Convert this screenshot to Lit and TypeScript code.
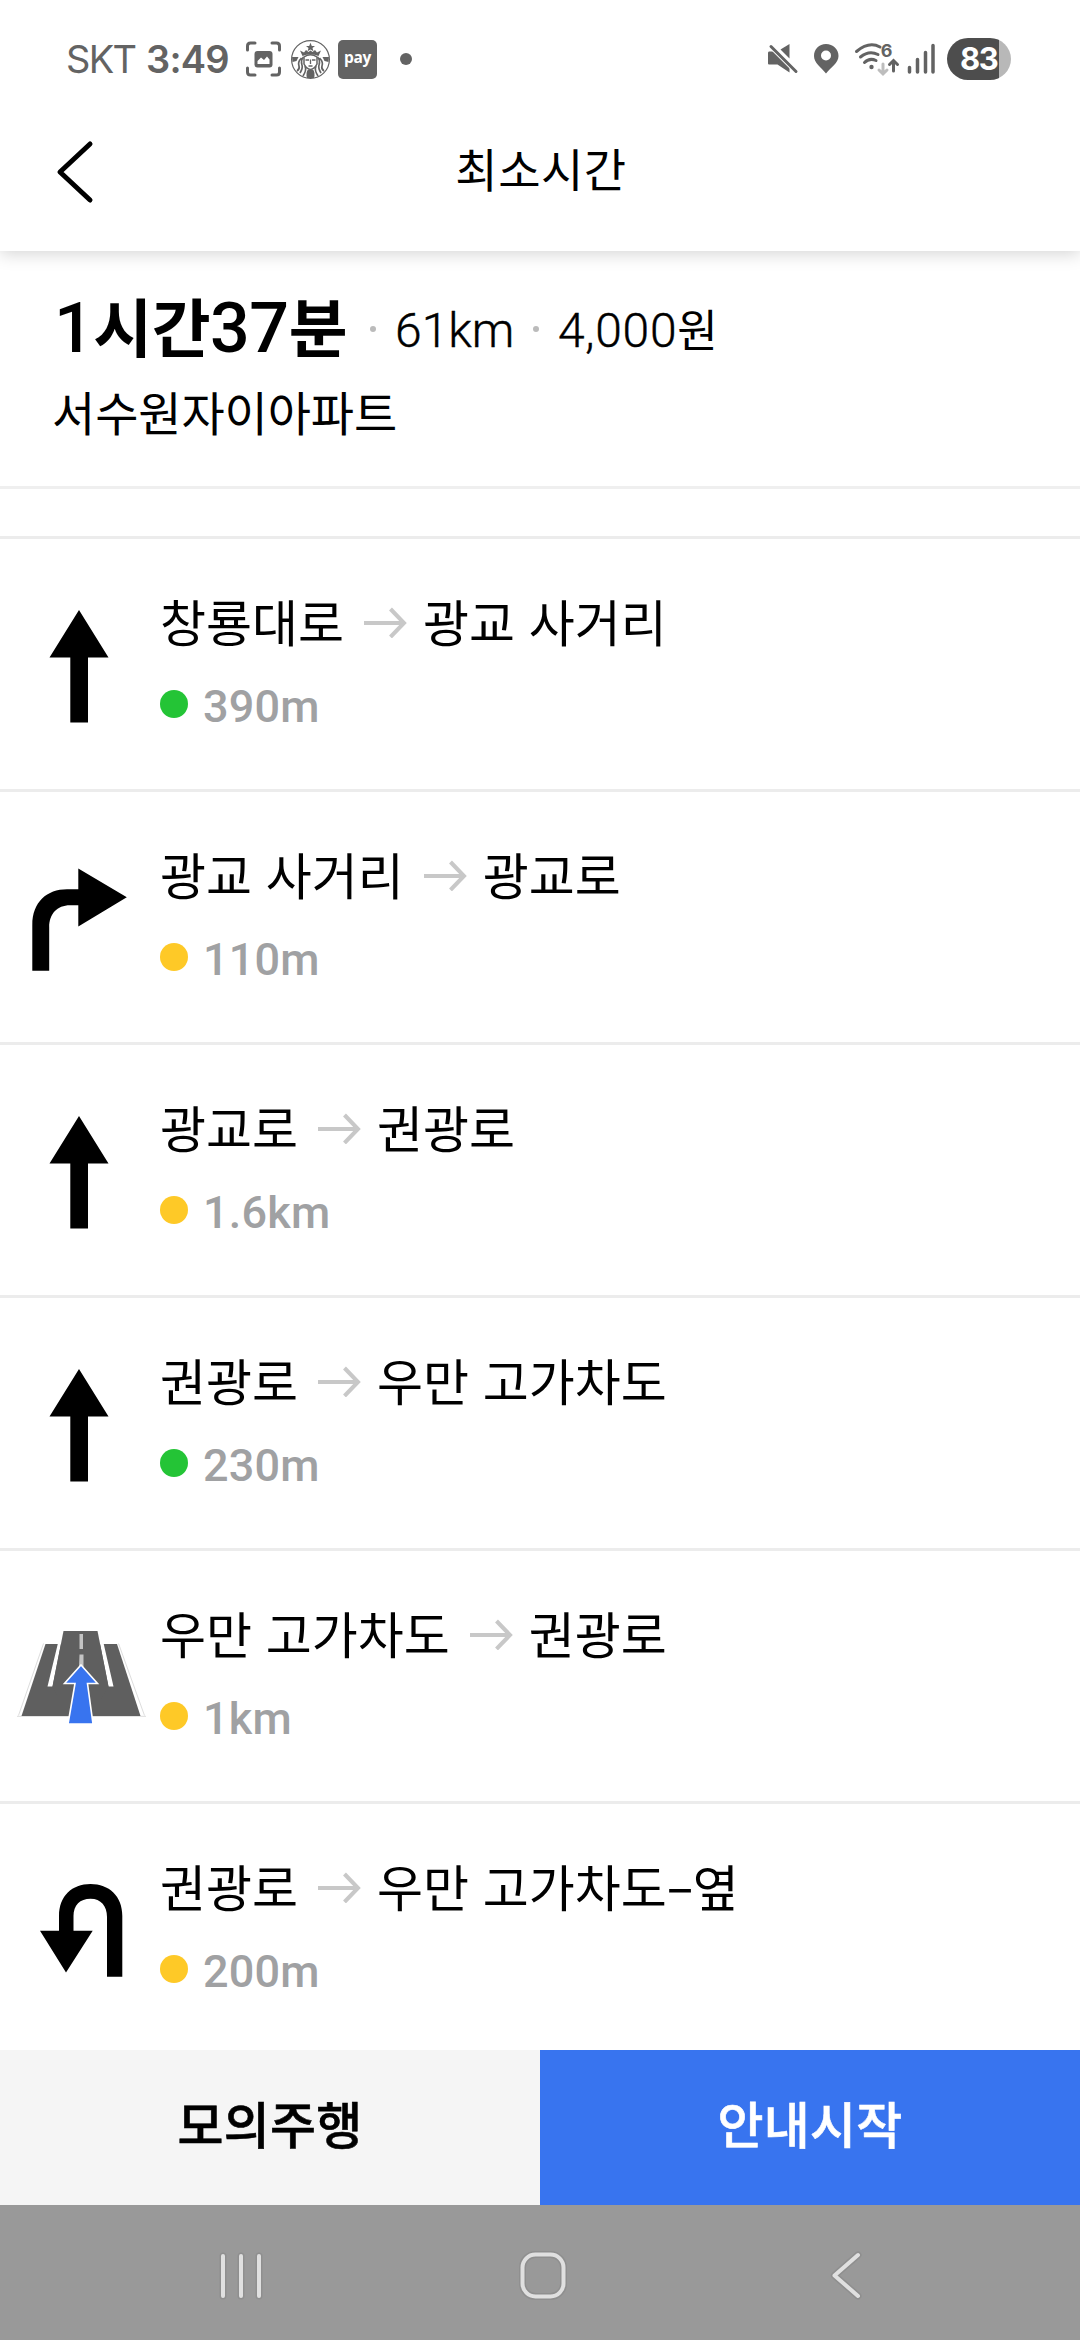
import { LitElement, html, css, svg, type SVGTemplateResult } from "lit";
import { customElement, property } from "lit/decorators.js";

type Maneuver = "straight" | "right" | "overpass" | "uturn";

interface Step {
  icon: Maneuver;
  from: string;
  to: string;
  distance: string;
  traffic: "smooth" | "slow";
}

const STEPS: Step[] = [
  { icon: "straight", from: "창룡대로", to: "광교 사거리", distance: "390m", traffic: "smooth" },
  { icon: "right", from: "광교 사거리", to: "광교로", distance: "110m", traffic: "slow" },
  { icon: "straight", from: "광교로", to: "권광로", distance: "1.6km", traffic: "slow" },
  { icon: "straight", from: "권광로", to: "우만 고가차도", distance: "230m", traffic: "smooth" },
  { icon: "overpass", from: "우만 고가차도", to: "권광로", distance: "1km", traffic: "slow" },
  { icon: "uturn", from: "권광로", to: "우만 고가차도-옆", distance: "200m", traffic: "slow" },
];

const MANEUVERS: Record<Maneuver, SVGTemplateResult> = {
  straight: svg`<path d="M79 71 L108.5 118.5 H88 V183.5 H70.3 V118.5 H49.5 Z" fill="#000"/>`,
  right: svg`<path d="M32.3 178.7 V133 C32.3 110 47 97.3 67 97.3 H78.3 V76.5 L126.8 105.2 L78.3 134.5 V113.2 H70 C57 113.2 49.2 122 49.2 135 V178.7 Z" fill="#000"/>`,
  overpass: svg`
    <path d="M43.5 92.5 L18.5 164.5 M118.5 92.5 L144.5 164.5 M17 165.3 H146" stroke="#ddd" stroke-width="1" fill="none"/>
    <path d="M45.5 93 H117 L140.5 165 H21.5 Z" fill="#5f5f5f"/>
    <path d="M58 92 L47.5 135.5 H52.5 L63.5 80 H97.5 L108.5 135.5 H113.5 L103.5 92 L98.5 79 H62.5 Z" fill="#fff"/>
    <path d="M63.5 80 H97.5 L108.5 135.5 L100 150 H60 L52.5 135.5 Z" fill="#5f5f5f"/>
    <path d="M79.5 83 H83 V98 H79.5 Z M79.5 103.500 H83.500 V116 H79 Z" fill="#c4c4c4"/>
    <path d="M81 114 L97.500 132.500 H87.500 L93 173 H68 L75 132.500 H64.500 Z" fill="#3874ef" stroke="#fff" stroke-width="1.6"/>`,
  uturn: svg`<path d="M122.300 172.700 V112 C122.300 92 109 80 90.500 80 C72 80 59 92 59 112 V126.700 H40 L66 168.500 L92.700 126.700 H73.500 V112 C73.500 101 80 94.700 90.500 94.700 C101 94.700 107 102 107 113 V172.700 Z" fill="#000"/>`,
};

@customElement("status-bar")
class StatusBar extends LitElement {
  static styles = css`
    :host {
      display: flex;
      align-items: flex-start;
      justify-content: space-between;
      height: 110px;
      padding: 30px 66px 0 66px;
      box-sizing: border-box;
      color: #636363;
      font-family: "Inter", "Roboto", sans-serif;
    }
    .side {
      display: flex;
      align-items: center;
      height: 58px;
    }
    .carrier {
      width: 80px;
      font-size: 38px;
      letter-spacing: -1.7px;
      white-space: nowrap;
      font-family: "Inter", sans-serif;
    }
    .clock {
      width: 100px;
      font-size: 38px;
      font-weight: 600;
      letter-spacing: -0.8px;
      white-space: nowrap;
    }
    .capture { margin-right: 10px; }
    .siren { margin-right: 8px; }
    .pay {
      width: 39px;
      height: 39px;
      border-radius: 5px;
      background: #636363;
      color: #fff;
      font: 700 15.500px/34px "Open Sans", sans-serif;
      text-align: center;
      letter-spacing: -0.3px;
    }
    .more {
      width: 12px;
      height: 12px;
      margin-left: 23px;
      border-radius: 50%;
      background: #636363;
    }
    .indicators { margin-right: 7px; }
    .battery {
      width: 64px;
      height: 42px;
      margin-right: 3px;
      border-radius: 21px;
      background: linear-gradient(90deg, #4d4d4d 52px, #b8b8b8 52px);
      color: #fff;
      font: 700 31px/42px "Inter", sans-serif;
      letter-spacing: -1.5px;
      text-indent: 13px;
    }
  `;

  render() {
    return html`
      <div class="side">
        <span class="carrier">SKT</span>
        <span class="clock">3:49</span>
        <svg class="capture" width="35" height="36" viewBox="0 0 35 36" fill="none">
          <path d="M1.500 9 V5 Q1.500 2 4.500 2 H9 M26 2 H30.500 Q33.500 2 33.500 5 V9 M33.500 27 V31 Q33.500 34 30.500 34 H26 M9 34 H4.500 Q1.500 34 1.500 31 V27" stroke="#636363" stroke-width="3" stroke-linecap="round"/>
          <rect x="8.500" y="10" width="18" height="16.500" rx="3" fill="#636363"/>
          <path d="M11.500 23 V20 L15 16.500 L18 19 L21 15.500 L23.500 18.500 V23 Z" fill="#fff"/>
        </svg>
        <svg class="siren" width="39" height="39" viewBox="0 0 39 39">
          <circle cx="19.500" cy="19.500" r="18.900" fill="#fff" stroke="#636363" stroke-width="1.200"/>
          <path d="M19.500 2.800 L20.800 6 H24 L21.500 8 L22.400 11.300 L19.500 9.400 L16.600 11.300 L17.500 8 L15 6 H18.200 Z" fill="#636363"/>
          <path d="M9 10.500 L13 12.500 L15 10 L17.500 12 L19.500 10.500 L21.500 12 L24 10 L26 12.500 L30 10.500 L27.500 16 Q19.500 12.500 11.500 16 Z" fill="#636363"/>
          <path d="M1 17 H7.500 L5.500 21 L1.500 22 Z M38 17 H31.500 L33.500 21 L37.500 22 Z" fill="#636363"/>
          <path d="M13 17 Q19.500 12.500 26 17 V24 Q23.500 29 19.500 29.500 Q15.500 29 13 24 Z" fill="#fff" stroke="#636363" stroke-width="1.500"/>
          <path d="M14.500 20 H18 M21 20 H24.500 M19.500 19.500 V24 M17.500 26 H21.500" stroke="#636363" stroke-width="1.300"/>
          <path d="M12.500 17 Q9.500 20 11 25 Q12 28 9 33 M10.500 18 Q6.500 22 8 26 Q9 29 6 31 M14 26 Q16 30 12 36 M26.500 17 Q29.500 20 28 25 Q27 28 30 33 M28.500 18 Q32.500 22 31 26 Q30 29 33 31 M25 26 Q23 30 27 36" fill="none" stroke="#636363" stroke-width="1.700"/>
          <path d="M16 38 Q14.500 33 17 29.500 H22 Q24.500 33 23 38 Z" fill="#636363"/>
        </svg>
        <span class="pay">pay</span>
        <span class="more"></span>
      </div>
      <div class="side">
        <svg class="indicators" width="174" height="42" viewBox="0 0 174 42" fill="none">
          <path d="M3 13.500 H9 L23.500 26 V34.500 L11.500 26.500 H3 Q2 26.500 2 25.500 V15 Q2 13.500 3 13.500 Z" fill="#636363"/>
          <path d="M14.500 11.500 L23.500 6 V20.500 Z" fill="#636363"/>
          <path d="M2 5 L31 34" stroke="#fff" stroke-width="5.500"/>
          <path d="M5 8.500 L30 33.500" stroke="#636363" stroke-width="3" stroke-linecap="round"/>
          <path d="M60 6 C53 6 48 11 48 18 C48 25 55 29 60 35.500 C65 29 72.500 25 72.500 18 C72.500 11 67 6 60 6 Z" fill="#636363"/>
          <circle cx="60" cy="17.500" r="5" fill="#fff"/>
          <g stroke="#636363" stroke-width="3" stroke-linecap="round">
            <path d="M90.500 13.500 Q103 3 114 9"/>
            <path d="M94.500 19 Q103 12 112 16.500"/>
            <path d="M98.500 24.500 Q103.500 19.500 110 22.500"/>
            <path d="M127.500 33 V24 M123.500 26.500 L127.500 22.500 L131.500 26.500"/>
            <path d="M143.500 34 V29.500 M151.500 34 V21.500 M159.500 34 V14.500 M167 34 V7.500" stroke-width="3.500"/>
          </g>
          <circle cx="105.500" cy="29" r="2.200" fill="#636363"/>
          <path d="M117 26 V35 M113 32 L117 36 L121 32" stroke="#bdbdbd" stroke-width="3" stroke-linecap="round"/>
          <text x="114.800" y="19" font-family="Inter, sans-serif" font-weight="700" font-size="18" fill="#636363">6</text>
        </svg>
        <div class="battery">83</div>
      </div>
    `;
  }
}

@customElement("route-step")
class RouteStep extends LitElement {
  @property({ attribute: false }) step!: Step;

  static styles = css`
    :host {
      display: flex;
      height: 253px;
      box-sizing: border-box;
      border-bottom: 3px solid #ececec;
    }
    .maneuver {
      flex: none;
      display: block;
    }
    .detail {
      padding-top: 51px;
    }
    .roads {
      display: flex;
      align-items: center;
      height: 60px;
      font-size: 50px;
      line-height: 60px;
      white-space: pre;
      word-spacing: 2.500px;
      color: #000;
    }
    .arrow {
      flex: none;
      margin: 3px 16px 0 20px;
    }
    .hyphen {
      display: inline-block;
      width: 26px;
      text-align: center;
      transform: translateY(-2px) scaleX(1.700);
    }
    .distance {
      display: flex;
      align-items: center;
      margin-top: 32px;
      height: 50px;
      color: #a0a1a3;
      font: 500 45px/50px "Roboto", sans-serif;
      letter-spacing: 0.200px;
    }
    .traffic {
      width: 28px;
      height: 28px;
      margin: -6px 15px 0 0;
      border-radius: 50%;
    }
    .smooth { background: #24c436; }
    .slow { background: #fec927; }
  `;

  private road(name: string) {
    const [head, tail] = name.split("-");
    return tail ? html`<span>${head}<span class="hyphen">-</span>${tail}</span>` : html`<span>${head}</span>`;
  }

  render() {
    const { icon, from, to, distance, traffic } = this.step;
    return html`
      <svg class="maneuver" width="160" height="250" viewBox="0 0 160 250">${MANEUVERS[icon]}</svg>
      <div class="detail">
        <div class="roads">
          ${this.road(from)}<svg class="arrow" width="43" height="32" viewBox="0 0 43 32" fill="none" stroke="#c8c8c8" stroke-width="4">
            <path d="M0 17 H40 M26.500 3 L40 17 L26.500 31"/></svg>${this.road(to)}
        </div>
        <div class="distance"><span class="traffic ${traffic}"></span>${distance}</div>
      </div>
    `;
  }
}

@customElement("app-root")
class AppRoot extends LitElement {
  static styles = css`
    :host {
      display: flex;
      flex-direction: column;
      width: 1080px;
      height: 2340px;
      overflow: hidden;
      background: #fff;
      color: #000;
      font-family: "Noto Sans CJK KR", sans-serif;
    }
    .header {
      flex: none;
      display: grid;
      grid-template-columns: 160px 1fr 160px;
      align-items: start;
      height: 141px;
      box-shadow: 0 3px 16px rgba(0, 0, 0, 0.17);
      clip-path: inset(0 0 -30px 0);
    }
    .back {
      margin: 30px 0 0 54px;
    }
    .title {
      margin: 27px -2px 0 0;
      text-align: center;
      font-size: 46px;
      font-weight: 400;
      line-height: 60px;
      letter-spacing: 0.500px;
    }
    .summary {
      flex: none;
      height: 235px;
      padding: 40px 0 0 52px;
      box-sizing: border-box;
    }
    .totals {
      display: flex;
      align-items: center;
      height: 80px;
      white-space: nowrap;
    }
    .duration {
      width: 316px;
      height: 80px;
      margin-left: 2px;
      font: 700 64px/80px "Roboto", "Noto Sans CJK KR", sans-serif;
      letter-spacing: -0.500px;
    }
    .num {
      font-weight: 500;
      font-size: 70px;
      line-height: 0;
    }
    .facts {
      display: flex;
      align-items: center;
      height: 80px;
    }
    .fact {
      font: 300 48px/80px "Roboto", "Noto Sans CJK KR", sans-serif;
      -webkit-text-stroke: 0.400px #000;
    }
    .length { width: 138px; }
    .toll { letter-spacing: 0.700px; }
    .won {
      font-size: 44px;
      line-height: 0;
      font-weight: 400;
      -webkit-text-stroke: 0;
    }
    .bullet {
      width: 6px;
      height: 6px;
      margin: -4px 19px 0 0;
      border-radius: 50%;
      background: #bbb;
    }
    .address {
      margin-top: 10px;
      font-size: 47px;
      line-height: 60px;
      letter-spacing: -0.100px;
    }
    .strip {
      flex: none;
      height: 53px;
      box-sizing: border-box;
      border-top: 3px solid #efefef;
      border-bottom: 3px solid #ececec;
    }
    .steps {
      flex: 1;
      min-height: 0;
      overflow: hidden;
    }
    .actions {
      flex: none;
      display: grid;
      grid-template-columns: 1fr 1fr;
      height: 155px;
    }
    .action {
      border: 0;
      padding: 0 0 11px;
      font: 500 50px/60px "Noto Sans CJK KR", sans-serif;
      letter-spacing: 0.300px;
      -webkit-text-stroke: 0.600px currentColor;
    }
    .simulate { background: #f5f5f5; color: #000; }
    .start { background: #3874ef; color: #fff; }
    .navbar {
      flex: none;
      height: 135px;
      background: #999;
    }
    .navbar svg { display: block; }
  `;

  render() {
    return html`
      <status-bar></status-bar>
      <div class="header">
        <svg class="back" width="44" height="64" viewBox="0 0 44 64" fill="none" stroke="#000" stroke-width="5" stroke-linecap="round" stroke-linejoin="round">
          <path d="M36 4 L6 32 L36 60"/>
        </svg>
        <div class="title">최소시간</div>
      </div>
      <div class="summary">
        <div class="totals">
          <div class="duration"><span class="num">1</span>시간<span class="num">37</span>분</div>
          <div class="facts">
            <span class="bullet"></span><span class="fact length">61km</span>
            <span class="bullet"></span><span class="fact toll">4,000<span class="won">원</span></span>
          </div>
        </div>
        <div class="address">서수원자이아파트</div>
      </div>
      <div class="strip"></div>
      <div class="steps">${STEPS.map((step) => html`<route-step .step=${step}></route-step>`)}</div>
      <div class="actions">
        <button class="action simulate">모의주행</button>
        <button class="action start">안내시작</button>
      </div>
      <div class="navbar">
        <svg width="1080" height="135" viewBox="0 0 1080 135" fill="none" stroke-linecap="round" stroke-linejoin="round">
          <g stroke="#8f8f8f" stroke-width="7">
            <path d="M223 51 V91 M241 51 V91 M259 51 V91"/>
            <rect x="522.500" y="49.500" width="41" height="42" rx="13"/>
            <path d="M858 50 L834.500 70.500 L858 91"/>
          </g>
          <g stroke="#e0e0e0" stroke-width="4">
            <path d="M223 51 V91 M241 51 V91 M259 51 V91"/>
            <rect x="522.500" y="49.500" width="41" height="42" rx="13"/>
            <path d="M858 50 L834.500 70.500 L858 91"/>
          </g>
        </svg>
      </div>
    `;
  }
}
